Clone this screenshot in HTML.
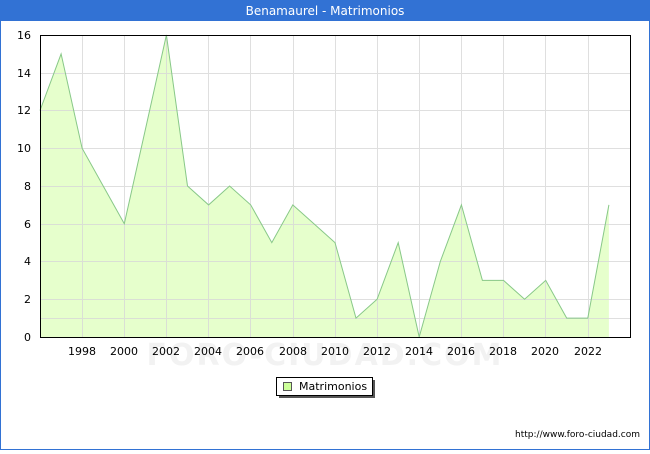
<!DOCTYPE html>
<html><head><meta charset="utf-8"><style>
body{margin:0;width:650px;height:450px;overflow:hidden;background:#fff;font-family:"DejaVu Sans","Liberation Sans",sans-serif}
</style></head><body>
<svg width="650" height="450" xmlns="http://www.w3.org/2000/svg" font-family="DejaVu Sans, Liberation Sans, sans-serif">
<rect x="0.5" y="0.5" width="649" height="449" fill="#fff" stroke="#3272d4"/>
<rect x="0" y="0" width="650" height="21" fill="#3272d4"/>
<text x="325" y="15" fill="#fff" font-size="12" text-anchor="middle">Benamaurel - Matrimonios</text>
<text x="325" y="365" fill="#f2f2f2" font-size="30" font-weight="bold" text-anchor="middle" letter-spacing="2">FORO-CIUDAD.COM</text>
<path d="M40,337 L40,110.5 61.1,53.9 82.1,148.25 103.2,186 124.3,223.75 145.4,129.4 166.4,35 187.5,186 208.6,204.9 229.6,186 250.7,204.9 271.8,242.6 292.8,204.9 313.9,223.75 335,242.6 356,318.1 377.1,299.25 398.2,242.6 419.2,337 440.3,261.5 461.4,204.9 482.4,280.4 503.5,280.4 524.6,299.25 545.7,280.4 566.7,318.1 587.8,318.1 608.9,204.9 608.9,337Z" fill="#e6ffcc" stroke="none"/>
<g stroke="#d8d8d8" stroke-width="1" opacity="0.8">
<path d="M82.5 35V337M124.5 35V337M166.5 35V337M208.5 35V337M250.5 35V337M293.5 35V337M335.5 35V337M377.5 35V337M419.5 35V337M461.5 35V337M503.5 35V337M545.5 35V337M588.5 35V337"/>
<path d="M40 318.5H630M40 299.5H630M40 261.5H630M40 224.5H630M40 186.5H630M40 148.5H630M40 110.5H630M40 73.5H630"/>
</g>
<polyline points="40,110.5 61.1,53.9 82.1,148.25 103.2,186 124.3,223.75 145.4,129.4 166.4,35 187.5,186 208.6,204.9 229.6,186 250.7,204.9 271.8,242.6 292.8,204.9 313.9,223.75 335,242.6 356,318.1 377.1,299.25 398.2,242.6 419.2,337 440.3,261.5 461.4,204.9 482.4,280.4 503.5,280.4 524.6,299.25 545.7,280.4 566.7,318.1 587.8,318.1 608.9,204.9" fill="none" stroke="#88c888" stroke-width="1"/>
<rect x="40.5" y="35.5" width="590" height="302" fill="none" stroke="#000"/>
<g font-size="11" fill="#000" text-anchor="end">
<text x="31" y="341">0</text><text x="31" y="303">2</text><text x="31" y="265">4</text><text x="31" y="228">6</text><text x="31" y="190">8</text><text x="31" y="152">10</text><text x="31" y="114">12</text><text x="31" y="77">14</text><text x="31" y="39">16</text>
</g>
<g font-size="11" fill="#000" text-anchor="middle">
<text x="82" y="355">1998</text><text x="124" y="355">2000</text><text x="166" y="355">2002</text><text x="208" y="355">2004</text><text x="250" y="355">2006</text><text x="293" y="355">2008</text><text x="335" y="355">2010</text><text x="377" y="355">2012</text><text x="419" y="355">2014</text><text x="461" y="355">2016</text><text x="503" y="355">2018</text><text x="545" y="355">2020</text><text x="588" y="355">2022</text>
</g>
<rect x="279" y="380" width="96" height="18" fill="#555"/>
<rect x="276.5" y="377.5" width="96" height="18" fill="#fff" stroke="#000"/>
<rect x="283.5" y="382.5" width="8" height="8" fill="#ccff99" stroke="#555"/>
<text x="299" y="390" font-size="11">Matrimonios</text>
<text x="640" y="437" font-size="9" text-anchor="end">http://www.foro-ciudad.com</text>
</svg>
</body></html>
